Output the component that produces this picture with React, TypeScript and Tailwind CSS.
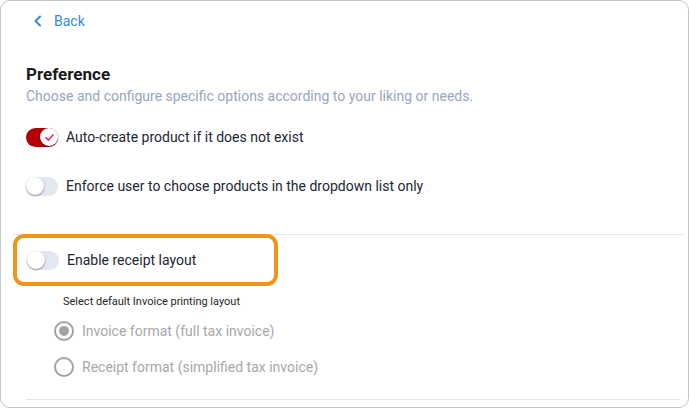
import React from "react";

function Toggle({ on }: { on?: boolean }) {
  return (
    <div
      className={`relative w-[32px] h-[19px] rounded-full shrink-0 ${on ? "bg-[#b30006]" : "bg-[#e3e7ef]"}`}
    >
      <div
        className={`absolute top-[0.5px] ${on ? "left-[14px]" : "left-[0px]"} w-[18px] h-[18px] rounded-full bg-white shadow-[0_1px_2px_rgba(0,0,0,0.4)] flex items-center justify-center`}
      >
        {on && (
          <svg width="11" height="11" viewBox="0 0 12 12" fill="none">
            <path d="M2.2 6.2 L4.9 8.8 L9.8 3.2" stroke="#e0306a" strokeWidth="1.8" strokeLinecap="round" strokeLinejoin="round" />
          </svg>
        )}
      </div>
    </div>
  );
}

function Radio({ checked, label }: { checked?: boolean; label: string }) {
  return (
    <div className="flex items-center h-[20px]">
      <div className="w-[20px] h-[20px] rounded-full border-2 border-[#a3a3a3] flex items-center justify-center shrink-0">
        {checked && <div className="w-[10px] h-[10px] rounded-full bg-[#a3a3a3]" />}
      </div>
      <span className="ml-[8px] text-[14px] text-[#a8a8a8]">{label}</span>
    </div>
  );
}

export default function App() {
  return (
    <div className="w-[689px] h-[408px] bg-white" style={{ fontFamily: "Roboto, 'Noto Sans', sans-serif" }}>
      <div className="w-[689px] h-[408px] border border-[#c4c6cc] rounded-[10px] flex flex-col">
        <div className="flex items-center h-[20px] mt-[10px] ml-[32px] text-[#2f8edb]">
          <svg width="10" height="12" viewBox="0 0 10 12" fill="none">
            <path d="M7 1.5 L2.5 6 L7 10.5" stroke="#2f8edb" strokeWidth="2" strokeLinecap="round" strokeLinejoin="round" />
          </svg>
          <span className="ml-[11px] text-[14px]">Back</span>
        </div>
        <div className="ml-[25px] mt-[32px] text-[17px] leading-[22px] font-bold text-[#1a1a1a]">Preference</div>
        <div className="ml-[25px] mt-[1px] text-[14px] leading-[20px] text-[#9ba5bd]">
          Choose and configure specific options according to your liking or needs.
        </div>
        <div className="ml-[25px] mt-[21px] flex items-center h-[20px]">
          <Toggle on />
          <span className="ml-[8px] text-[14px] text-[#222633]">Auto-create product if it does not exist</span>
        </div>
        <div className="ml-[25px] mt-[29px] flex items-center h-[20px]">
          <Toggle />
          <span className="ml-[8px] text-[14px] text-[#222633]">Enforce user to choose products in the dropdown list only</span>
        </div>
        <div className="relative mt-[38px] ml-[12px] mr-[3px] border-t border-[#e5e7eb]">
          <div className="w-[265px] h-[52px] -mt-px border-[4px] border-[#f0951a] rounded-[11px] flex items-center pl-[10px]">
            <Toggle />
            <span className="ml-[8px] text-[14px] text-[#222633]">Enable receipt layout</span>
          </div>
        </div>
        <div className="ml-[62px] mt-[9px] text-[11px] leading-[14px] text-[#1f1f1f]">Select default Invoice printing layout</div>
        <div className="ml-[53px] mt-[12px] flex flex-col gap-[16px]">
          <Radio checked label="Invoice format (full tax invoice)" />
          <Radio label="Receipt format (simplified tax invoice)" />
        </div>
        <div className="ml-[25px] mr-[8px] mt-[22px] border-t border-[#e5e7eb]" />
      </div>
    </div>
  );
}
